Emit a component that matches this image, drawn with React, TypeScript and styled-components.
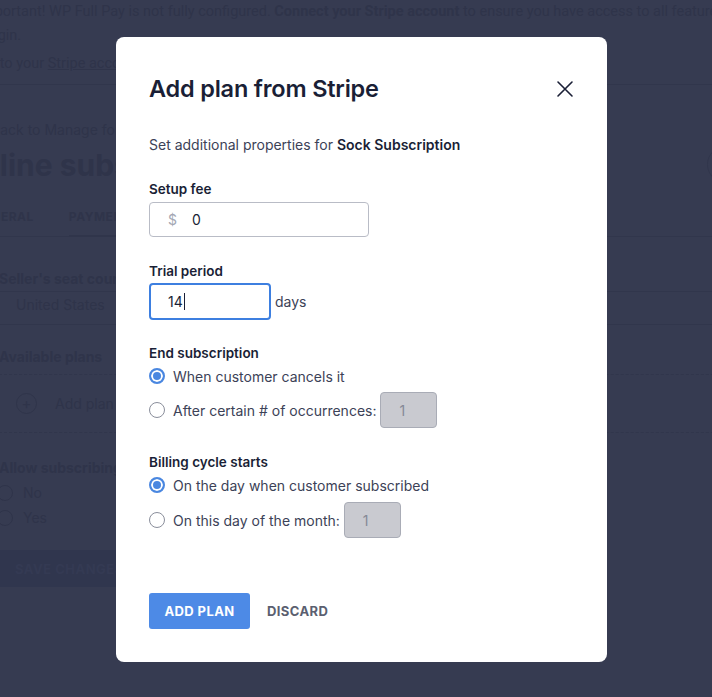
import React from "react";
import styled, { createGlobalStyle } from "styled-components";

const GlobalStyle = createGlobalStyle`
  html, body {
    margin: 0;
    padding: 0;
    background: #363b51;
    overflow: hidden;
  }
  * {
    box-sizing: border-box;
  }
`;

/* ---------- dimmed page behind the dialog ---------- */

const Page = styled.div`
  width: 712px;
  height: 697px;
  background: #363b51;
  color: #2f344a;
  font-family: Roboto, "Liberation Sans", sans-serif;
  overflow: hidden;
`;

const Notice = styled.div`
  width: 770px;
  margin-left: -22px;
  padding-bottom: 8px;
  font-size: 14.5px;
  line-height: 24px;
  border-bottom: 1px solid #31364c;

  p {
    margin: 0;
    white-space: nowrap;
  }

  p + p + p {
    margin-top: 4px;
  }

  b {
    font-weight: 700;
  }
`;

const PageBody = styled.div`
  padding-top: 35px;
  font-family: Inter, sans-serif;
`;

const BackLink = styled.div`
  margin-left: -9px;
  font-size: 14px;
  line-height: 20px;
`;

const TitleRow = styled.div`
  display: flex;
  align-items: center;
  justify-content: space-between;
  width: 744px;
  margin-top: 6px;
`;

const PageTitle = styled.h1`
  margin: 0 0 0 -42px;
  font-size: 30px;
  font-weight: 700;
  line-height: 36px;
`;

const RoundButton = styled.div`
  width: 37px;
  height: 37px;
  border-radius: 50%;
  border: 1px solid #31364c;
`;

const Tabs = styled.div`
  display: flex;
  gap: 35px;
  margin-top: 20px;
  margin-left: -26px;
  width: 760px;
  border-bottom: 1px solid #31364c;
  font-size: 12px;
  font-weight: 700;
  letter-spacing: 0.5px;
`;

const Tab = styled.div<{ $active?: boolean }>`
  padding: 6px 0 10px;
  line-height: 16px;
  border-bottom: 2px solid ${(p) => (p.$active ? "#30354b" : "transparent")};
  margin-bottom: -1px;
`;

const Section = styled.div<{ $top: number }>`
  margin-top: ${(p) => p.$top}px;
  margin-left: -1px;
`;

const SectionTitle = styled.div<{ $dashed?: boolean; $plain?: boolean }>`
  font-size: 14px;
  font-weight: 700;
  line-height: 20px;
  padding-bottom: ${(p) => (p.$plain ? 2 : p.$dashed ? 7 : 2)}px;
  border-bottom: ${(p) =>
    p.$plain ? "none" : `1px ${p.$dashed ? "dashed" : "solid"} #31364c`};
  width: 760px;
`;

const SelectRow = styled.div`
  width: 760px;
  padding: 3px 0 9px 17px;
  font-size: 14px;
  line-height: 20px;
  border-bottom: 1px solid #31364c;
`;

const AddRow = styled.div`
  width: 760px;
  display: flex;
  align-items: center;
  gap: 18px;
  padding: 18px 0 18px 17px;
  font-size: 14px;
  border-bottom: 1px dashed #31364c;
`;

const PlusCircle = styled.div`
  width: 21px;
  height: 21px;
  border-radius: 50%;
  border: 1px solid #2f344a;
  display: flex;
  align-items: center;
  justify-content: center;
  font-size: 15px;
  line-height: 1;
`;

const BgRadio = styled.div`
  display: flex;
  align-items: center;
  gap: 10px;
  margin-left: -2px;
  font-size: 14px;
  line-height: 25px;

  span {
    width: 16px;
    height: 16px;
    border-radius: 50%;
    border: 1px solid #2f344a;
  }
`;

const SaveBar = styled.div`
  margin-top: 20px;
  width: 150px;
  height: 37px;
  background: #30364e;
  color: #343a53;
  display: flex;
  align-items: center;
  padding-left: 15px;
  font-size: 13px;
  font-weight: 700;
  letter-spacing: 0.5px;
`;

/* ---------- dialog ---------- */

const Backdrop = styled.div`
  position: fixed;
  inset: 0;
  padding: 37px 0 0 116px;
`;

const Modal = styled.div`
  width: 491px;
  height: 625px;
  background: #ffffff;
  border-radius: 8px;
  padding: 34px 33px 33px 33px;
  display: flex;
  flex-direction: column;
  font-family: Inter, "Liberation Sans", sans-serif;
  color: #1a1f36;
`;

const Header = styled.div`
  display: flex;
  align-items: center;
  justify-content: space-between;
`;

const Title = styled.h2`
  margin: 0;
  font-size: 23.5px;
  font-weight: 600;
  line-height: 36px;
  letter-spacing: -0.2px;
  color: #1a1f36;
`;

const CloseButton = styled.button`
  border: none;
  background: none;
  padding: 0;
  width: 18px;
  height: 18px;
  display: flex;
  color: #1a1f36;
`;

const Intro = styled.p`
  margin: 28px 0 0 0;
  font-size: 14px;
  line-height: 20px;
  color: #3c4257;

  strong {
    font-weight: 600;
    color: #1a1f36;
  }
`;

const Label = styled.div<{ $top: number }>`
  margin-top: ${(p) => p.$top}px;
  font-size: 13.5px;
  font-weight: 600;
  line-height: 20px;
  color: #1a1f36;
`;

const InputBox = styled.div<{ $width: number; $focused?: boolean }>`
  width: ${(p) => p.$width}px;
  height: ${(p) => (p.$focused ? 37 : 35)}px;
  border: ${(p) => (p.$focused ? "2px solid #3d7fe0" : "1px solid #b9bcc6")};
  border-radius: 4px;
  display: flex;
  align-items: center;
  padding-left: ${(p) => (p.$focused ? 17 : 18)}px;
  font-size: 14px;
  color: #1a1f36;
`;

const InputRow = styled.div<{ $top: number }>`
  display: flex;
  align-items: center;
  gap: 4px;
  margin-top: ${(p) => p.$top}px;
  font-size: 14px;
  color: #3c4257;
`;

const Currency = styled.span`
  color: #a3a7b3;
  width: 24px;
`;

const Caret = styled.span`
  display: inline-block;
  width: 1px;
  height: 17px;
  background: #1a1f36;
  margin-left: 1px;
`;

const RadioList = styled.div`
  display: flex;
  flex-direction: column;
  margin-top: 1px;
`;

const RadioRow = styled.label<{ $height: number }>`
  display: flex;
  align-items: center;
  gap: 8px;
  height: ${(p) => p.$height}px;
  font-size: 14px;
  color: #3c4257;
`;

const RadioDot = styled.span<{ $checked?: boolean }>`
  width: 16px;
  height: 16px;
  border-radius: 50%;
  flex-shrink: 0;
  border: ${(p) => (p.$checked ? "2px solid #4a87e0" : "1px solid #8a8e9b")};
  background: ${(p) => (p.$checked ? "#4a87e0" : "#fff")};
  box-shadow: ${(p) => (p.$checked ? "inset 0 0 0 2px #fff" : "none")};
`;

const SmallBox = styled.div`
  width: 57px;
  height: 36px;
  margin-left: -4px;
  border: 1px solid #a9acb6;
  border-radius: 4px;
  background: #c9cad0;
  color: #858996;
  display: flex;
  align-items: center;
  padding-left: 18px;
  font-size: 14px;
`;

const Footer = styled.div`
  margin-top: auto;
  display: flex;
  align-items: center;
  gap: 17px;
`;

const PrimaryButton = styled.button`
  width: 101px;
  height: 36px;
  border: none;
  border-radius: 3px;
  background: #4d8ae6;
  color: #fff;
  font-family: Inter, "Liberation Sans", sans-serif;
  font-size: 13px;
  font-weight: 700;
  letter-spacing: 0.4px;
`;

const TextButton = styled.button`
  border: none;
  background: none;
  padding: 0;
  color: #5b5f70;
  font-family: Inter, "Liberation Sans", sans-serif;
  font-size: 13px;
  font-weight: 700;
  letter-spacing: 0.4px;
`;

const BackgroundPage: React.FC = () => (
  <Page>
    <Notice>
      <p>
        Important! WP Full Pay is not fully configured. <b>Connect your Stripe account</b> to
        ensure you have access to all features and options of the
      </p>
      <p>plugin.</p>
      <p>
        Go to your <u>Stripe account</u> settings
      </p>
    </Notice>
    <PageBody>
      <BackLink>Back to Manage forms</BackLink>
      <TitleRow>
        <PageTitle>Online subscription</PageTitle>
        <RoundButton />
      </TitleRow>
      <Tabs>
        <Tab>GENERAL</Tab>
        <Tab $active>PAYMENT</Tab>
        <Tab>APPEARANCE</Tab>
      </Tabs>
      <Section $top={32}>
        <SectionTitle>Seller's seat country</SectionTitle>
        <SelectRow>United States</SelectRow>
      </Section>
      <Section $top={22}>
        <SectionTitle $dashed>Available plans</SectionTitle>
        <AddRow>
          <PlusCircle>+</PlusCircle>
          Add plan from Stripe
        </AddRow>
      </Section>
      <Section $top={25}>
        <SectionTitle $plain>Allow subscribing</SectionTitle>
        <BgRadio>
          <span /> No
        </BgRadio>
        <BgRadio>
          <span /> Yes
        </BgRadio>
      </Section>
      <SaveBar>SAVE CHANGES</SaveBar>
    </PageBody>
  </Page>
);

export default function App() {
  return (
    <>
      <GlobalStyle />
      <BackgroundPage />
      <Backdrop>
        <Modal>
          <Header>
            <Title>Add plan from Stripe</Title>
            <CloseButton aria-label="Close">
              <svg width="18" height="18" viewBox="0 0 18 18" fill="none">
                <path
                  d="M2 2L16 16M16 2L2 16"
                  stroke="#1a1f36"
                  strokeWidth="1.6"
                  strokeLinecap="round"
                />
              </svg>
            </CloseButton>
          </Header>

          <Intro>
            Set additional properties for <strong>Sock Subscription</strong>
          </Intro>

          <Label $top={24}>Setup fee</Label>
          <InputRow $top={3}>
            <InputBox $width={220}>
              <Currency>$</Currency>0
            </InputBox>
          </InputRow>

          <Label $top={24}>Trial period</Label>
          <InputRow $top={2}>
            <InputBox $width={122} $focused>
              14
              <Caret />
            </InputBox>
            days
          </InputRow>

          <Label $top={23}>End subscription</Label>
          <RadioList>
            <RadioRow $height={24}>
              <RadioDot $checked />
              When customer cancels it
            </RadioRow>
            <RadioRow $height={44}>
              <RadioDot />
              After certain # of occurrences:
              <SmallBox>1</SmallBox>
            </RadioRow>
          </RadioList>

          <Label $top={20}>Billing cycle starts</Label>
          <RadioList>
            <RadioRow $height={24}>
              <RadioDot $checked />
              On the day when customer subscribed
            </RadioRow>
            <RadioRow $height={46}>
              <RadioDot />
              On this day of the month:
              <SmallBox>1</SmallBox>
            </RadioRow>
          </RadioList>

          <Footer>
            <PrimaryButton>ADD PLAN</PrimaryButton>
            <TextButton>DISCARD</TextButton>
          </Footer>
        </Modal>
      </Backdrop>
    </>
  );
}
